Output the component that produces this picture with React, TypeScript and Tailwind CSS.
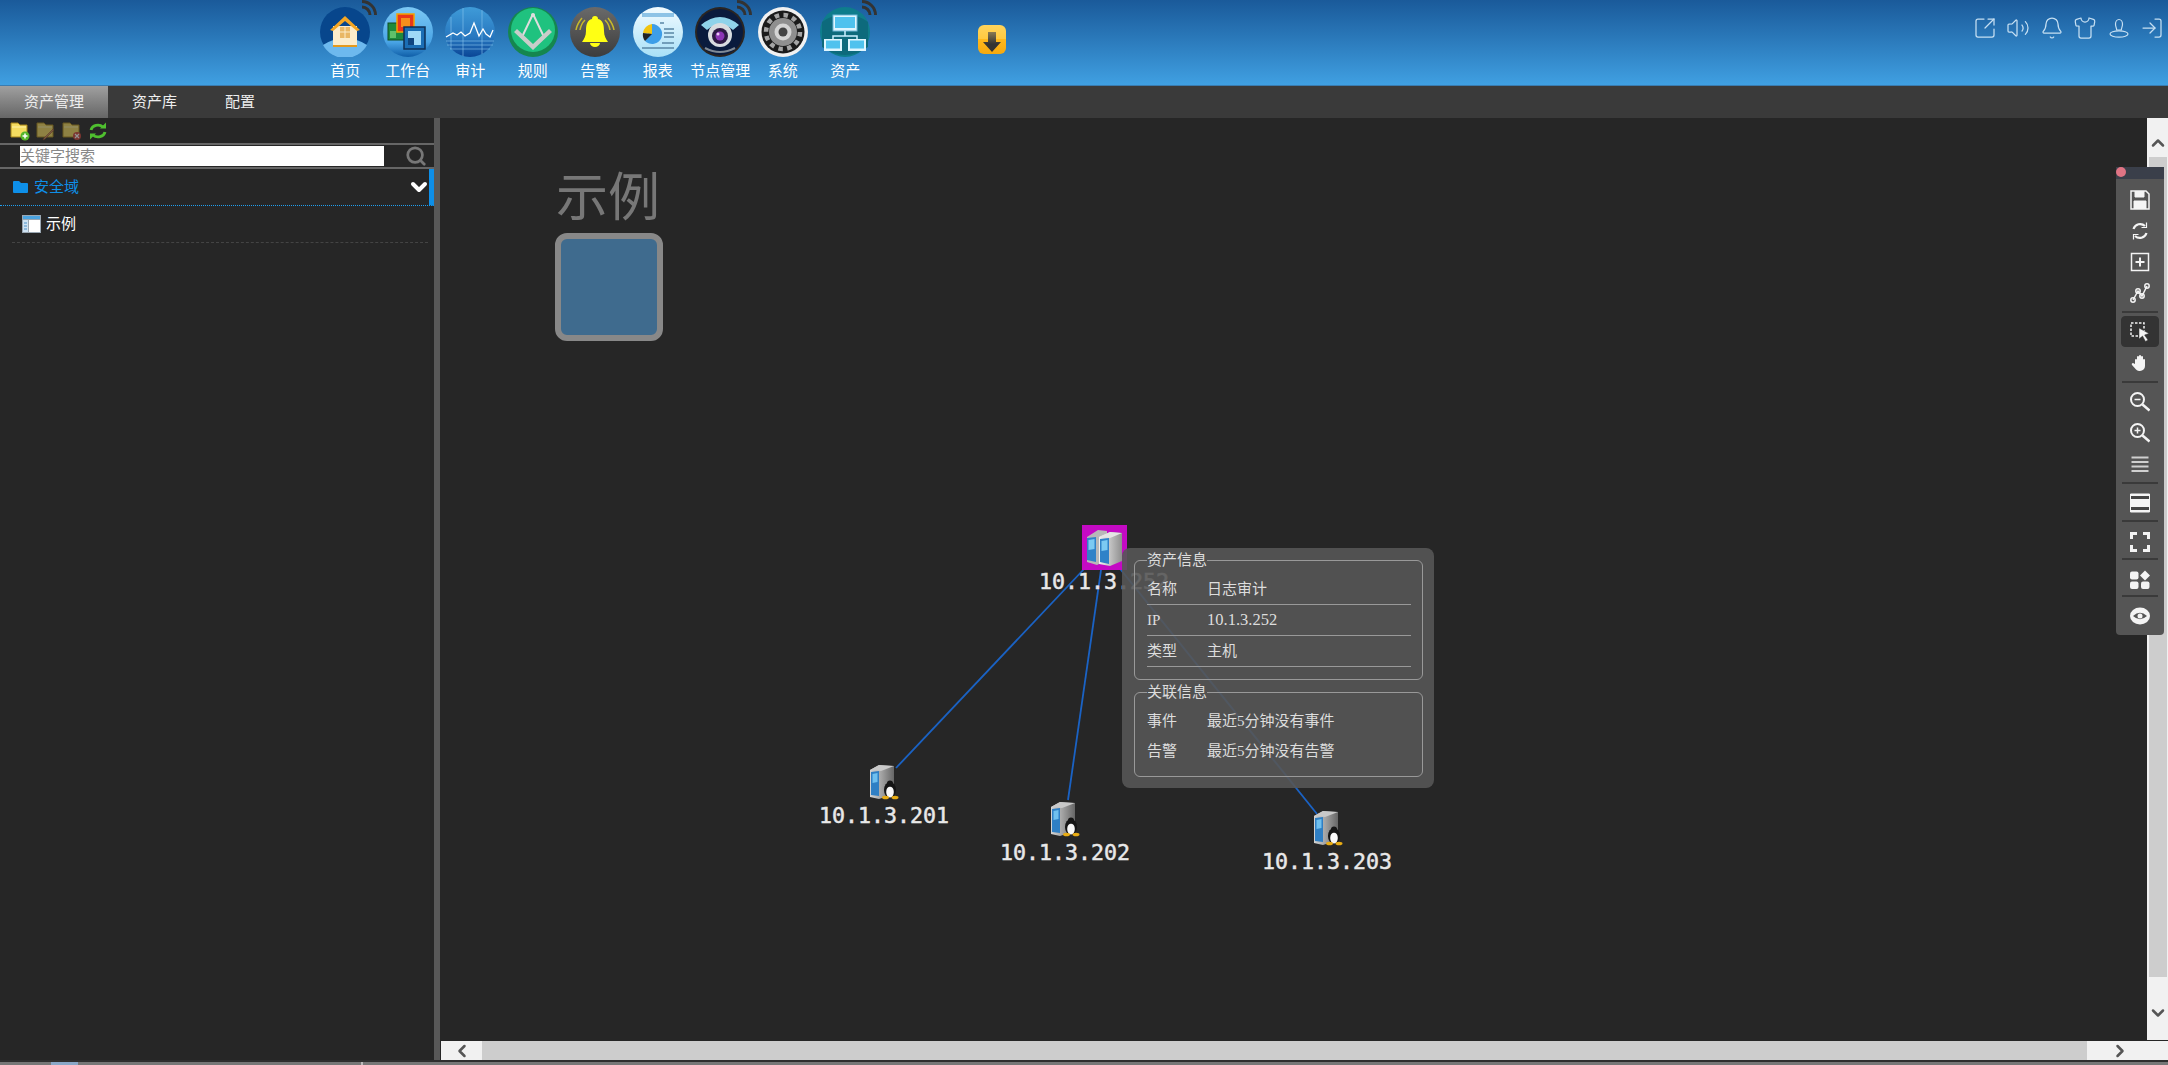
import React from 'react';
import { Bell, ChevronDown, ChevronLeft, ChevronRight, ChevronUp, LogIn, Search, Shirt, SquareArrowOutUpRight, Volume2 } from 'lucide-react';

const Wifi = () => (
  <svg viewBox="0 0 16 16" className="absolute right-[-7px] top-[-7px] h-[16px] w-[16px]" fill="none" stroke="#333" strokeWidth="3">
    <path d="M1 7a8 8 0 0 1 8 8" />
    <path d="M1 1.500a13.500 13.500 0 0 1 13.500 13.500" />
  </svg>
);

const HomeIcon = () => (
  <svg viewBox="0 0 50 50" className="h-full w-full">
    <circle cx="25" cy="25" r="25" fill="#07468c" />
    <path d="M3 38q22-14 44 0a25 25 0 0 1-44 0z" fill="#6db9ee" />
    <path d="M13 19h24v19H13z" fill="#fbeccb" />
    <path d="M10 23 25 9l15 14-3 1-12-10-12 10z" fill="#f5a623" />
    <path d="M20 20h10v11H20z" fill="#e9b765" />
    <path d="M25 20v11M20 25h10" stroke="#fbeccb" />
    <path d="M13 38h24v2H13z" fill="#e59a1c" />
  </svg>
);

const DeskIcon = () => (
  <svg viewBox="0 0 50 50" className="h-full w-full">
    <defs>
      <linearGradient id="desk" x1="0" y1="0" x2="0" y2="1">
        <stop offset="0" stopColor="#7cc8f5" />
        <stop offset="0.7" stopColor="#4aa5e6" />
        <stop offset="1" stopColor="#0f5ea8" />
      </linearGradient>
    </defs>
    <circle cx="25" cy="25" r="25" fill="url(#desk)" />
    <rect x="5" y="16" width="17" height="17" fill="#1e8a3c" stroke="#0e4d22" />
    <path d="M7 24h6v7H7zM15 18h5v5h-5z" fill="#5fc06a" />
    <rect x="14" y="7" width="17" height="18" fill="#e8371a" stroke="#f5a300" strokeWidth="1.5" />
    <rect x="18" y="11" width="9" height="9" fill="#f58e1b" />
    <rect x="21" y="20" width="21" height="22" fill="#1b6eb5" stroke="#0e2f55" strokeWidth="1.5" />
    <rect x="25" y="24" width="13" height="14" fill="#9fd9f7" />
    <rect x="25" y="31" width="6" height="7" fill="#10457f" />
  </svg>
);

const AuditIcon = () => (
  <svg viewBox="0 0 50 50" className="h-full w-full">
    <defs>
      <linearGradient id="audit" x1="0" y1="0" x2="0" y2="1">
        <stop offset="0" stopColor="#3f9bd8" />
        <stop offset="0.6" stopColor="#2878c0" />
        <stop offset="1" stopColor="#0a4596" />
      </linearGradient>
    </defs>
    <circle cx="25" cy="25" r="25" fill="url(#audit)" />
    <path d="M6 10v32M18 1v48M37 3v44M1 34h48M2 38h46M5 42h40" stroke="#8cc8ee" strokeWidth="0.6" />
    <path d="M1 30l7-4 4 2 4-3 4 4 5-3 4-10 5 13 4-7 3 5 4 3 3-7" fill="none" stroke="#fff" strokeWidth="1.3" />
  </svg>
);

const RuleIcon = () => (
  <svg viewBox="0 0 50 50" className="h-full w-full">
    <circle cx="25" cy="25" r="25" fill="#15864f" />
    <circle cx="25" cy="23" r="22" fill="#1fc27f" />
    <path d="M25 7 14 30M25 7l11 23" stroke="#ddd" strokeWidth="2" fill="none" />
    <circle cx="25" cy="8" r="2" fill="#ddd" />
    <path d="M6 25 25 43l19-18-3-3-16 15L9 22z" fill="#c9cdca" />
  </svg>
);

const AlarmIcon = () => (
  <svg viewBox="0 0 50 50" className="h-full w-full">
    <defs>
      <linearGradient id="alarm" x1="0" y1="0" x2="0" y2="1">
        <stop offset="0" stopColor="#6a6a6a" />
        <stop offset="1" stopColor="#3c3c3c" />
      </linearGradient>
    </defs>
    <circle cx="25" cy="25" r="25" fill="url(#alarm)" />
    <path d="M25 9c-2 0-3 1-3 3-5 1-6 6-6 12 0 5-2 8-4 11h26c-2-3-4-6-4-11 0-6-1-11-6-12 0-2-1-3-3-3z" fill="#ffff14" />
    <path d="M20 36a5 4 0 0 0 10 0z" fill="#ffff14" />
    <path d="M12 11Q7 17 6 23M15 13q-4 4-5 10M38 11q5 6 6 12M35 13q4 4 5 10" stroke="#c7b92a" strokeWidth="1.5" fill="none" />
  </svg>
);

const ReportIcon = () => (
  <svg viewBox="0 0 50 50" className="h-full w-full">
    <defs>
      <linearGradient id="report" x1="0" y1="0" x2="0" y2="1">
        <stop offset="0" stopColor="#f2fbff" />
        <stop offset="1" stopColor="#a8e0f7" />
      </linearGradient>
    </defs>
    <circle cx="25" cy="25" r="25" fill="url(#report)" />
    <rect x="9" y="6" width="32" height="4" fill="#8dc3e6" />
    <path d="M19 17a10 10 0 1 1-7 17z" fill="#3d9ee8" />
    <path d="M19 17a10 10 0 0 0-9 9l9 1z" fill="#f2c40f" />
    <path d="M10 26a10 10 0 0 0 2 8l7-7z" fill="#222" />
    <path d="M27 16h4M31 22h10M31 26h10M31 30h10M29 36h12M9 41h32" stroke="#5a87a5" strokeWidth="1.3" />
  </svg>
);

const CameraIcon = () => (
  <svg viewBox="0 0 50 50" className="h-full w-full">
    <circle cx="25" cy="25" r="25" fill="#2a2522" />
    <circle cx="25" cy="25" r="23" fill="#0a1b3d" />
    <path d="M6 18Q25 2 44 18l-6 5Q25 12 12 23z" fill="#8fd3ea" />
    <circle cx="25" cy="28" r="12" fill="#d8dcdf" />
    <circle cx="25" cy="29" r="8" fill="#2d1a44" />
    <circle cx="25" cy="29" r="4.5" fill="#8c35b5" />
    <circle cx="23" cy="27" r="1.5" fill="#e9c6f5" />
    <path d="M10 41q15 8 30 0" stroke="#7f8a96" strokeWidth="2" fill="none" />
  </svg>
);

const GearIcon = () => (
  <svg viewBox="0 0 50 50" className="h-full w-full">
    <circle cx="25" cy="25" r="25" fill="#f1f1f1" />
    <circle cx="25" cy="25" r="21.5" fill="#1b1b1b" />
    <circle cx="25" cy="25" r="14" fill="#8f8f8f" />
    <circle cx="25" cy="25" r="17" fill="none" stroke="#a5a5a5" strokeWidth="4.5" strokeDasharray="4.5 4.4" />
    <circle cx="25" cy="25" r="8.5" fill="#d4d4d4" />
    <circle cx="25" cy="25" r="4.5" fill="#444" />
  </svg>
);

const AssetIcon = () => (
  <svg viewBox="0 0 50 50" className="h-full w-full">
    <circle cx="25" cy="25" r="25" fill="#0e7d8c" />
    <path d="M2 15q23-16 46 0v25q-23 16-46 0z" fill="#0d6a7c" />
    <rect x="13" y="8" width="24" height="16" fill="#dff6ff" stroke="#6fb8d8" />
    <rect x="15" y="10" width="20" height="11" fill="#4fc2ee" />
    <path d="M25 24v5M13 33v-4h24v4" stroke="#c9f0ff" strokeWidth="1.5" fill="none" />
    <rect x="4" y="32" width="18" height="12" fill="#dff6ff" />
    <rect x="6" y="33.5" width="14" height="8" fill="#4fc2ee" />
    <rect x="28" y="32" width="18" height="12" fill="#dff6ff" />
    <rect x="30" y="33.5" width="14" height="8" fill="#4fc2ee" />
  </svg>
);

const navItems = [
  { label: '首页', icon: <HomeIcon />, wifi: true },
  { label: '工作台', icon: <DeskIcon /> },
  { label: '审计', icon: <AuditIcon /> },
  { label: '规则', icon: <RuleIcon /> },
  { label: '告警', icon: <AlarmIcon /> },
  { label: '报表', icon: <ReportIcon /> },
  { label: '节点管理', icon: <CameraIcon />, wifi: true },
  { label: '系统', icon: <GearIcon /> },
  { label: '资产', icon: <AssetIcon />, wifi: true },
];

const UserOutline = () => (
  <svg viewBox="0 0 20 20" className="h-[20px] w-[20px]" fill="none" stroke="#c6dff2" strokeWidth="1.200">
    <path d="M6.500 6a3.500 4.500 0 0 1 7 0c0 3-1.200 4-1.200 6h-4.600c0-2-1.200-3-1.200-6z" />
    <ellipse cx="10" cy="16" rx="9" ry="3.200" />
  </svg>
);

const DownloadBadge = () => (
  <svg viewBox="0 0 28 29" className="h-[29px] w-[28px]">
    <defs>
      <linearGradient id="dl" x1="0" y1="0" x2="0" y2="1">
        <stop offset="0" stopColor="#ffd45c" />
        <stop offset="0.5" stopColor="#ffc93f" />
        <stop offset="0.5" stopColor="#ffb81c" />
        <stop offset="1" stopColor="#f5a90f" />
      </linearGradient>
      <linearGradient id="dlArrow" x1="0" y1="0" x2="0" y2="1">
        <stop offset="0" stopColor="#8a7a52" />
        <stop offset="0.6" stopColor="#333" />
      </linearGradient>
    </defs>
    <rect width="28" height="29" rx="6" fill="url(#dl)" />
    <path d="M10 7h8v10h5L14 27 5 17h5z" fill="url(#dlArrow)" />
  </svg>
);

const FolderSmall = ({ dim, badge }: { dim?: boolean; badge: 'add' | 'edit' | 'del' }) => (
  <svg viewBox="0 0 20 20" className={dim ? 'h-[20px] w-[20px] opacity-50' : 'h-[20px] w-[20px]'}>
    <path d="M1 2h7l2 2h7v12H1z" fill="#f5dc60" stroke="#a8861a" />
    <path d="M2 6h14" stroke="#fff3a8" />
    {badge === 'add' && (
      <>
        <circle cx="15" cy="15" r="4.500" fill="#56b52a" />
        <path d="M12.500 15h5M15 12.500v5" stroke="#fff" strokeWidth="1.500" />
      </>
    )}
    {badge === 'edit' && <path d="M18 9 9 18l-2 1 1-2 9-9z" fill="#d08a5a" stroke="#804020" strokeWidth="0.5" />}
    {badge === 'del' && (
      <>
        <circle cx="15" cy="15" r="4" fill="#d0453a" />
        <path d="m13 13 4 4m0-4-4 4" stroke="#fff" strokeWidth="1.200" />
      </>
    )}
  </svg>
);

const GreenRefresh = () => (
  <svg viewBox="0 0 20 20" className="h-[20px] w-[20px]" fill="none" stroke="#4fbf2f" strokeWidth="2.800">
    <path d="M3 9a7 6 0 0 1 12-3" />
    <path d="M12 7.500h6V1.500" strokeWidth="0" fill="#4fbf2f" />
    <path d="M17 11a7 6 0 0 1-12 3" />
    <path d="M8 12.500H2v6" strokeWidth="0" fill="#4fbf2f" />
  </svg>
);

const TreeTable = () => (
  <svg viewBox="0 0 19 18" className="h-[18px] w-[19px]">
    <rect width="19" height="18" fill="#9aa7b2" />
    <rect x="1" y="1" width="17" height="3" fill="#4aa3e0" />
    <rect x="1" y="5" width="5" height="12" fill="#cfe3f3" />
    <path d="M2 8h3M2 11h3M2 14h3" stroke="#4a90c8" />
    <rect x="7" y="5" width="11" height="12" fill="#fff" />
  </svg>
);

const ServerBody = ({ id }: { id: string }) => (
  <g>
    <defs>
      <linearGradient id={id} x1="0" y1="0" x2="1" y2="0">
        <stop offset="0" stopColor="#d5d5d5" />
        <stop offset="0.5" stopColor="#a0a0a0" />
        <stop offset="1" stopColor="#666" />
      </linearGradient>
    </defs>
    <path d="M1 7 10 2l15 1v28l-15 5-9-2z" fill={`url(#${id})`} />
    <path d="M1 7 10 2l15 1-13 5z" fill="#c9c9c9" />
    <path d="M2 9l8-1v25l-8-1z" fill="#2f7fc4" />
    <path d="M3.500 11l5-1v9l-5 1z" fill="#6fc0ef" />
  </g>
);

const LinuxServer = ({ id }: { id: string }) => (
  <svg viewBox="0 0 30 37" className="h-[37px] w-[30px]">
    <ServerBody id={id} />
    <ellipse cx="21" cy="27" rx="6" ry="8" fill="#151515" />
    <ellipse cx="21" cy="29" rx="3.800" ry="5.500" fill="#f8f8f8" />
    <circle cx="21" cy="20.500" r="3" fill="#151515" />
    <ellipse cx="16.500" cy="34.500" rx="3.500" ry="1.800" fill="#e8ac14" />
    <ellipse cx="26" cy="34.500" rx="3.500" ry="1.800" fill="#e8ac14" />
  </svg>
);

const DualServer = () => (
  <svg viewBox="0 0 45 45" className="h-full w-full">
    <defs>
      <linearGradient id="dualMetal" x1="0" y1="0" x2="1" y2="0">
        <stop offset="0" stopColor="#f2f2f2" />
        <stop offset="1" stopColor="#8f8f8f" />
      </linearGradient>
    </defs>
    {/* back unit */}
    <path d="M5 12 16 5l9 1v29l-10 5-10-3z" fill="#b8b8b8" />
    <path d="M5 13l9-1v25l-9-2z" fill="#2f82c8" />
    <path d="M6.500 15l6-1v10l-6 1z" fill="#7ccaf2" />
    {/* front unit */}
    <path d="M17 12 28 7l12 1v28l-12 5-11-2z" fill="url(#dualMetal)" />
    <path d="M17 12 28 7l12 1-12 5z" fill="#e4e4e4" />
    <path d="M18 14l9-1v26l-9-2z" fill="#2f82c8" />
    <path d="M19.500 16l6-1v10l-6 1z" fill="#7ccaf2" />
  </svg>
);

const NodeLabel = ({ className, children }: { className: string; children: React.ReactNode }) => (
  <div className={`absolute h-[26px] font-['DejaVu_Sans_Mono',monospace] text-[21.6px] leading-[26px] whitespace-nowrap text-[#e8e8e8] [-webkit-text-stroke:0.5px_#e8e8e8] ${className}`}>
    {children}
  </div>
);

const InfoRow = ({ name, value, latin }: { name: string; value: string; latin?: boolean }) => (
  <div className="mr-[11px] ml-[12px] flex h-[31px] items-center border-b border-[#999]">
    <span className="w-[60px]">{name}</span>
    <span className={latin ? 'text-[16.500px]' : ''}>{value}</span>
  </div>
);

const PlainRow = ({ name, value }: { name: string; value: string }) => (
  <div className="ml-[12px] flex h-[30px] items-center">
    <span className="w-[60px]">{name}</span>
    <span>{value}</span>
  </div>
);

const ToolSep = ({ className }: { className: string }) => <div className={`h-[2px] w-[36px] bg-[#3a3a3a] ${className}`} />;

const ToolBtn = ({ children, active }: { children: React.ReactNode; active?: boolean }) => (
  <div className={active ? 'flex h-[31px] w-[38px] items-center justify-center rounded-[4px] border border-[#333] bg-[#333]' : 'flex h-[31px] w-[38px] items-center justify-center'}>
    <svg viewBox="0 0 20 20" className="h-[20px] w-[20px]" fill="none" stroke="#f4f4f4" strokeWidth="1.500">
      {children}
    </svg>
  </div>
);

const App = () => {
  return (
    <div className="flex h-[1065px] w-full flex-col overflow-hidden bg-[#262626] font-['Liberation_Sans','Noto_Sans_CJK_SC',sans-serif]">
      {/* top bar */}
      <header className="flex h-[85px] shrink-0 items-start bg-gradient-to-b from-[#1a5a9a] to-[#40a0e2] pl-[314px]">
        <nav className="flex">
          {navItems.map((item) => (
            <div key={item.label} className="flex w-[62.5px] flex-col items-center pt-[7px]">
              <div className="relative h-[50px] w-[50px]">
                {item.icon}
                {item.wifi && <Wifi />}
              </div>
              <span className="mt-[5px] text-[15px] leading-[18px] whitespace-nowrap text-white">{item.label}</span>
            </div>
          ))}
        </nav>
        <div className="mt-[25px] ml-[101px]">
          <DownloadBadge />
        </div>
        <div className="mt-[16px] mr-[-1px] ml-auto flex text-[#c6dff2]">
          <div className="flex w-[33.500px] items-center justify-center"><SquareArrowOutUpRight size={24} strokeWidth={1.250} /></div>
          <div className="flex w-[33.500px] items-center justify-center"><Volume2 size={24} strokeWidth={1.250} /></div>
          <div className="flex w-[33.500px] items-center justify-center"><Bell size={24} strokeWidth={1.250} /></div>
          <div className="flex w-[33.500px] items-center justify-center"><Shirt size={24} strokeWidth={1.250} /></div>
          <div className="flex w-[33.500px] items-center justify-center"><UserOutline /></div>
          <div className="flex w-[33.500px] items-center justify-center"><LogIn size={24} strokeWidth={1.250} /></div>
        </div>
      </header>

      {/* tabs */}
      <div className="flex h-[33px] shrink-0 border-t border-[#3a7cb0] bg-[#3a3a3a] text-[15px] text-[#eee]">
        <div className="flex items-center bg-gradient-to-b from-[#a0a0a0] to-[#666] px-[24px]">资产管理</div>
        <div className="flex items-center px-[24px]">资产库</div>
        <div className="flex items-center px-[24px]">配置</div>
      </div>

      <div className="flex min-h-0 flex-1">
        {/* left tree */}
        <aside className="flex w-[434px] shrink-0 flex-col bg-[#262626]">
          <div className="flex h-[25px] items-center gap-[6px] pl-[10px]">
            <FolderSmall badge="add" />
            <FolderSmall badge="edit" dim />
            <FolderSmall badge="del" dim />
            <GreenRefresh />
          </div>
          <div className="flex h-[26px] items-center border-y-2 border-[#666] pl-[20px]">
            <input
              readOnly
              placeholder="关键字搜索"
              className="h-[20px] w-[364px] bg-white text-[15px] text-black outline-none placeholder:text-[#888]"
            />
            <Search size={22} strokeWidth={3} className="ml-[21px] text-[#777]" />
          </div>
          <div className="flex h-[37px] items-center border-r-[5px] border-b border-r-[#0e8fe8] border-b-[#1f9ff0] border-dotted pl-[12px] [border-right-style:solid]">
            <svg viewBox="0 0 17 14" className="h-[14px] w-[17px]">
              <path d="M1 2a1 1 0 0 1 1-1h5l2 2h6a1 1 0 0 1 1 1v8a1 1 0 0 1-1 1H2a1 1 0 0 1-1-1z" fill="#0e8fe8" />
            </svg>
            <span className="ml-[5px] text-[15px] text-[#0e8fe8]">安全域</span>
            <ChevronDown size={24} strokeWidth={4} className="mr-[-2px] ml-auto text-white" />
          </div>
          <div className="mr-[6px] ml-[12px] flex h-[37px] items-center border-b border-dashed border-[#444] pl-[10px] text-[15px] text-white">
            <TreeTable />
            <span className="ml-[5px]">示例</span>
          </div>
        </aside>
        <div className="w-[6px] shrink-0 bg-[#585858]" />
        <div className="w-px shrink-0 bg-[#262626]" />

        {/* canvas column */}
        <div className="relative flex min-w-0 flex-1 flex-col">
          <div className="flex min-h-0 flex-1">
            <main className="relative min-w-0 flex-1 overflow-hidden bg-[#262626]">
              <div className="absolute top-[54px] left-[115px] text-[52px] leading-[52px] text-[#777]">示例</div>
              <div className="absolute top-[115px] left-[114px] h-[108px] w-[108px] rounded-[12px] border-[6px] border-[#888] bg-[#3f6b8e]" />

              {/* links */}
              <svg className="absolute top-0 left-0 h-full w-full" stroke="#1a62c4" strokeWidth="1.800" fill="none">
                <path d="M644 450 455 650" />
                <path d="M661 445 627 682" />
                <path d="M672 442 876 696" />
              </svg>

              <div className="absolute top-[407px] left-[641px] h-[45px] w-[45px] bg-[#c40ac4]">
                <DualServer />
              </div>
              <NodeLabel className="top-[451px] left-[598px]">10.1.3.252</NodeLabel>

              <div className="absolute top-[645px] left-[428px]"><LinuxServer id="srv1" /></div>
              <NodeLabel className="top-[685px] left-[378px]">10.1.3.201</NodeLabel>

              <div className="absolute top-[682px] left-[609px]"><LinuxServer id="srv2" /></div>
              <NodeLabel className="top-[722px] left-[559px]">10.1.3.202</NodeLabel>

              <div className="absolute top-[691px] left-[872px]"><LinuxServer id="srv3" /></div>
              <NodeLabel className="top-[731px] left-[821px]">10.1.3.203</NodeLabel>

              {/* asset tooltip */}
              <div className="absolute top-[430px] left-[681px] h-[240px] w-[312px] rounded-[8px] bg-[#565656]/90 pt-[2px] pr-[11px] pl-[12px] font-['Liberation_Serif','Noto_Sans_CJK_SC',serif] text-[15px] text-[#ddd]">
                <fieldset className="rounded-[6px] border border-[#999] pt-[4px] pb-[12px]">
                  <legend className="ml-[12px] h-[20px] p-0 leading-[20px]">资产信息</legend>
                  <InfoRow name="名称" value="日志审计" />
                  <InfoRow name="IP" value="10.1.3.252" latin />
                  <InfoRow name="类型" value="主机" />
                </fieldset>
                <fieldset className="mt-[2px] rounded-[6px] border border-[#999] pt-[4px] pb-[10px]">
                  <legend className="ml-[12px] h-[20px] p-0 leading-[20px]">关联信息</legend>
                  <PlainRow name="事件" value="最近5分钟没有事件" />
                  <PlainRow name="告警" value="最近5分钟没有告警" />
                </fieldset>
              </div>
            </main>

            {/* vertical scrollbar */}
            <div className="flex w-[21px] shrink-0 flex-col items-center bg-[#f1f1f1]">
              <ChevronUp size={20} strokeWidth={3} className="mt-[15px] text-[#555]" />
              <div className="mt-[4px] ml-[1px] h-[820px] w-[18px] bg-[#cdcdcd]" />
              <ChevronDown size={20} strokeWidth={3} className="mt-[26px] text-[#555]" />
            </div>
          </div>

          {/* horizontal scrollbar */}
          <div className="mt-px flex h-[19px] shrink-0 items-center bg-[#f1f1f1]">
            <div className="flex w-[41px] justify-center">
              <ChevronLeft size={20} strokeWidth={3} className="text-[#555]" />
            </div>
            <div className="h-full w-[1605px] bg-[#cdcdcd]" />
            <div className="ml-[23px] flex w-[20px] justify-center">
              <ChevronRight size={20} strokeWidth={3} className="text-[#555]" />
            </div>
          </div>

          {/* floating graph tools */}
          <div className="absolute top-[49px] right-[4px] flex h-[468px] w-[48px] flex-col items-center rounded-b-[4px] bg-[#555]">
            <div className="relative h-[12px] w-full bg-[#3a3f4a]">
              <div className="absolute top-0 left-0 h-[10px] w-[10px] rounded-full bg-[#e07484]" />
            </div>
            <div className="h-[5px] shrink-0" />
            <ToolBtn>
              <path d="M1 1h15l3 3v15H1z" />
              <path d="M5 1v6h9V1M4 19v-8h12v8" fill="#f4f4f4" strokeWidth="1" />
            </ToolBtn>
            <ToolBtn>
              <path d="M3.500 8a7 7 0 0 1 11.500-3M16.500 12a7 7 0 0 1-11.500 3" strokeWidth="2.200" />
              <path d="M16.500 1.500v5h-5M3.500 18.500v-5h5" strokeWidth="1.200" />
            </ToolBtn>
            <ToolBtn>
              <path d="M1.500 1.500h17v17h-17z" />
              <path d="M10 5.500v9M5.500 10h9" strokeWidth="2" />
            </ToolBtn>
            <ToolBtn>
              <path d="M3 17 8 8l4 5 5-10" />
              <circle cx="3" cy="17" r="2.200" />
              <circle cx="8" cy="8" r="2.200" />
              <circle cx="12" cy="13" r="2.200" />
              <circle cx="17" cy="3" r="2.200" />
            </ToolBtn>
            <ToolSep className="mt-[3px] mb-[3px]" />
            <ToolBtn active>
              <path d="M1 1h13v13H1z" strokeDasharray="2.500 1.500" />
              <path d="M9 6l10 5.500-4.500 1.500 3.500 5-2.500 1.500-3-5.500L9 17z" fill="#f4f4f4" stroke="#333" strokeWidth="0.500" />
            </ToolBtn>
            <ToolBtn>
              <path d="M5 11V7a1 1 0 0 1 2 0V4a1 1 0 0 1 2 0V3a1 1 0 0 1 2 0v1a1 1 0 0 1 2 0v3a1 1 0 0 1 2 0v6a5 5 0 0 1-5 5H9a4 4 0 0 1-3-1.500L2 12a1.200 1.200 0 0 1 2-1.500z" fill="#f4f4f4" stroke="none" />
            </ToolBtn>
            <ToolSep className="mt-[3px] mb-[3px]" />
            <ToolBtn>
              <circle cx="7.500" cy="7.500" r="6.500" strokeWidth="2" />
              <path d="M4.500 7.500h6" />
              <path d="m12.500 12.500 7 6" strokeWidth="2.500" />
            </ToolBtn>
            <ToolBtn>
              <circle cx="7.500" cy="7.500" r="6.500" strokeWidth="2" />
              <path d="M4.500 7.500h6M7.500 4.500v6" />
              <path d="m12.500 12.500 7 6" strokeWidth="2.500" />
            </ToolBtn>
            <ToolBtn>
              <path d="M1.500 3.500h17M1.500 8h17M1.500 12.500h17M1.500 17h17" strokeWidth="2" stroke="#d0d0d0" />
            </ToolBtn>
            <ToolSep className="mt-[3px] mb-[3px]" />
            <ToolBtn>
              <path d="M.5 1h19v18H.5z" fill="#f4f4f4" strokeWidth="1" />
              <path d="M1 4.500h18M1 15.500h18" stroke="#444" strokeWidth="3" />
            </ToolBtn>
            <ToolSep className="mt-[2px] mb-[4px]" />
            <ToolBtn>
              <path d="M7 1.500H1.500V7M13 1.500h5.500V7M7 18.500H1.500V13M13 18.500h5.500V13" strokeWidth="3" />
            </ToolBtn>
            <ToolSep className="mt-px mb-[4px]" />
            <ToolBtn>
              <rect x="0" y="1.500" width="8.500" height="8" rx="2" fill="#f4f4f4" stroke="none" />
              <path d="M15 .5l5 5-5 5-5-5z" fill="#f4f4f4" stroke="none" />
              <rect x="0" y="11.500" width="8.500" height="7.500" rx="2" fill="#f4f4f4" stroke="none" />
              <rect x="11" y="11.500" width="8.500" height="7.500" rx="2" fill="#f4f4f4" stroke="none" />
            </ToolBtn>
            <ToolSep className="mb-[3px]" />
            <ToolBtn>
              <ellipse cx="10" cy="10" rx="10" ry="8.500" fill="#f4f4f4" stroke="none" />
              <path d="M3 10q7-6.500 14 0-7 6.500-14 0z" fill="#555" stroke="none" />
              <circle cx="10" cy="10" r="2.500" fill="#f4f4f4" stroke="none" />
            </ToolBtn>
          </div>
        </div>
      </div>

      {/* status strip */}
      <div className="flex h-[5px] shrink-0 flex-col">
        <div className="h-[2px] bg-[#2e2e2e]" />
        <div className="relative h-[3px] bg-[#777]">
          <div className="absolute top-0 left-[51px] h-full w-[27px] bg-[#8aa8c8]" />
          <div className="absolute top-0 left-[361px] h-full w-[2px] bg-[#bbb]" />
        </div>
      </div>
    </div>
  );
};

export default App;
